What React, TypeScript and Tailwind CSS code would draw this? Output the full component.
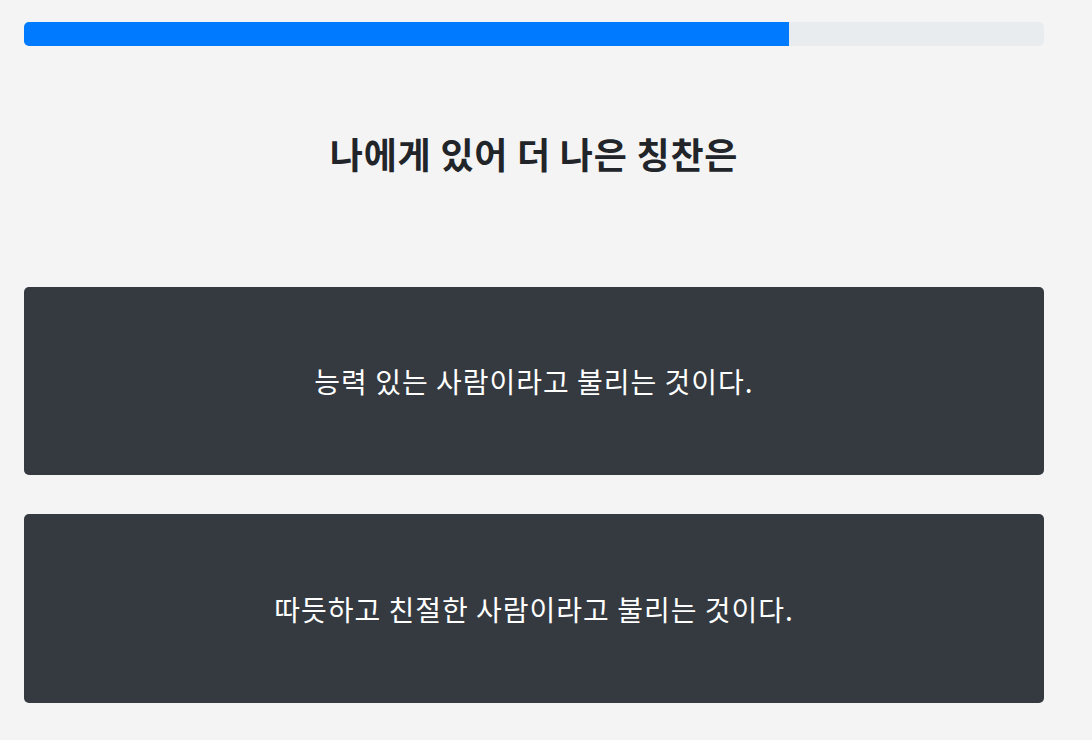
export default function App() {
  const font = { fontFamily: '"Noto Sans CJK KR", "Noto Sans", sans-serif' };
  return (
    <div className="min-h-screen bg-[#f4f4f4] px-6 pt-[22px]" style={font}>
      <div className="w-[1020px]">
        <div className="h-6 rounded-[5px] bg-[#e9ecef] overflow-hidden flex">
          <div className="h-full w-[765px] bg-[#007bff]" />
        </div>
        <h1 className="mt-[83px] text-center text-[36px] tracking-[0.75px] font-bold leading-[48px] text-[#212529]">
          나에게 있어 더 나은 칭찬은
        </h1>
        <div className="mt-[110px] flex flex-col gap-[39px]">
          <button className="h-[188px] rounded-[5px] bg-[#343a40] text-white text-[28px] tracking-[1px] flex items-center justify-center">
            능력 있는 사람이라고 불리는 것이다.
          </button>
          <button className="h-[189px] rounded-[5px] bg-[#343a40] text-white text-[28px] tracking-[1px] flex items-center justify-center">
            따듯하고 친절한 사람이라고 불리는 것이다.
          </button>
        </div>
      </div>
    </div>
  );
}
